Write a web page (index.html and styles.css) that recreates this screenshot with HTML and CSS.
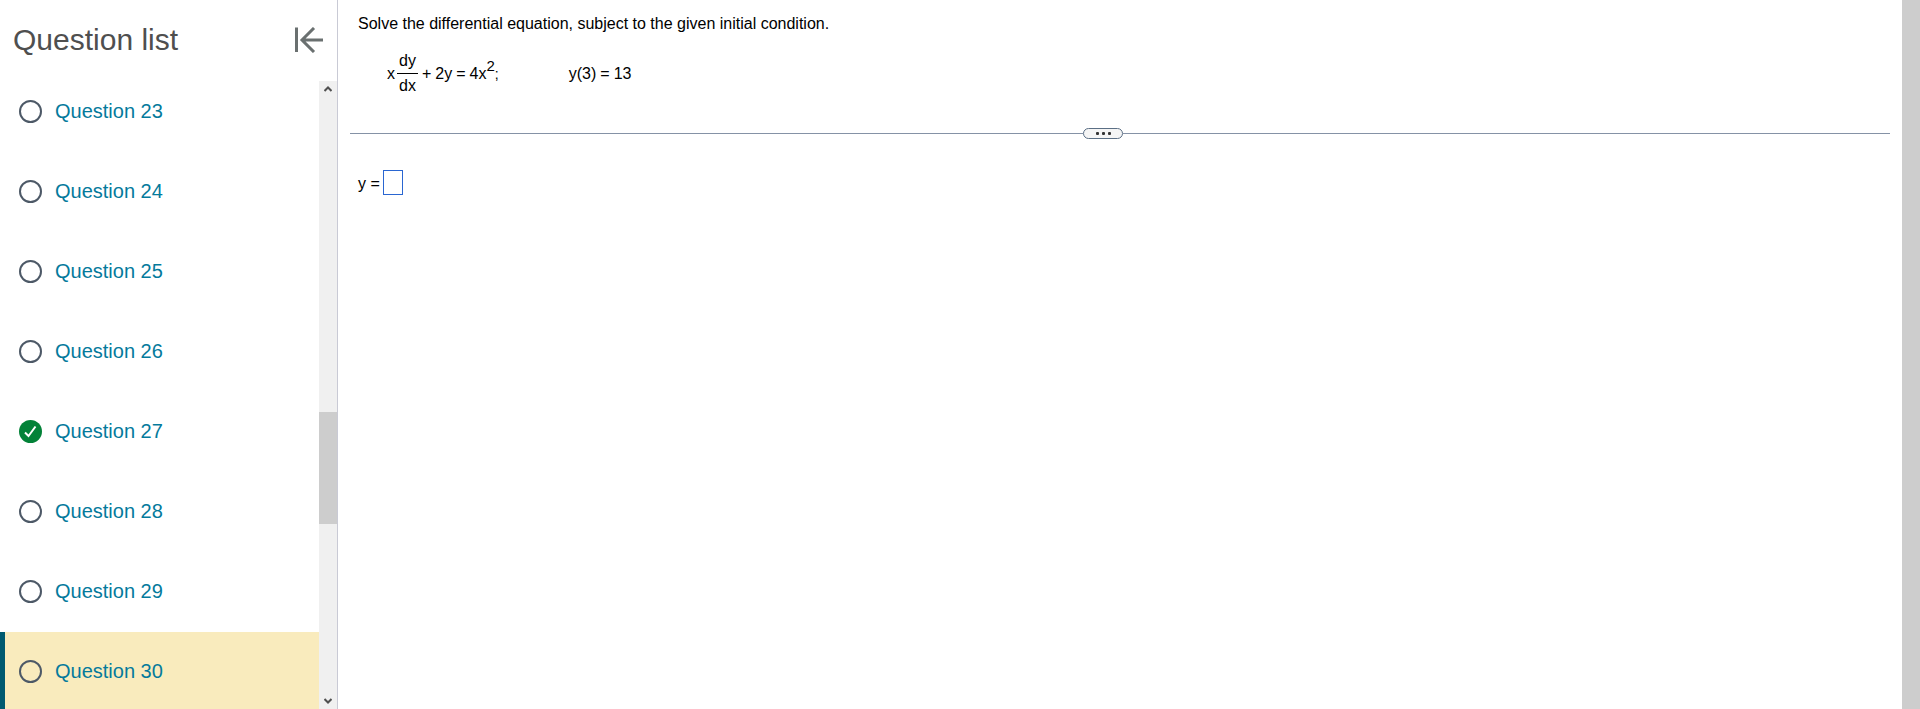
FILE: index.html
```html
<!DOCTYPE html>
<html lang="en">
<head>
	<meta charset="utf-8">
	<title>Question list</title>
	<link rel="stylesheet" href="styles.css">
</head>
<body>
	<aside class="sidebar">
		<div class="sidebar-header">
			<h1>Question list</h1>
			<button class="collapse" type="button" aria-label="Collapse question list">
				<svg width="28" height="26" viewBox="0 0 28 26">
					<path d="M1.5 0.5V25M28 13H7M19 1L7 13L19 25" />
				</svg>
			</button>
		</div>
		<div class="sidebar-body">
			<ul class="questions">
				<li><a href="#q23"><span class="circle"></span>Question 23</a></li>
				<li><a href="#q24"><span class="circle"></span>Question 24</a></li>
				<li><a href="#q25"><span class="circle"></span>Question 25</a></li>
				<li><a href="#q26"><span class="circle"></span>Question 26</a></li>
				<li><a href="#q27">
					<svg class="done" width="23" height="23" viewBox="0 0 23 23">
						<circle cx="11.5" cy="11.5" r="11.5" />
						<path d="M6 12.5L9.5 16L16.5 6.5" />
					</svg>Question 27</a></li>
				<li><a href="#q28"><span class="circle"></span>Question 28</a></li>
				<li><a href="#q29"><span class="circle"></span>Question 29</a></li>
				<li class="current"><a href="#q30"><span class="circle"></span>Question 30</a></li>
			</ul>
			<div class="scrollbar">
				<button class="scroll-button" type="button" aria-label="Scroll up">
					<svg width="8" height="6" viewBox="0 0 8 6"><path d="M0.5 5L4 1.5L7.5 5" /></svg>
				</button>
				<div class="track">
					<div class="thumb"></div>
				</div>
				<button class="scroll-button" type="button" aria-label="Scroll down">
					<svg width="8" height="6" viewBox="0 0 8 6"><path d="M0.5 1L4 4.5L7.5 1" /></svg>
				</button>
			</div>
		</div>
	</aside>
	<main class="content">
		<p class="prompt">Solve the differential equation, subject to the given initial condition.</p>
		<div class="equation">
			<span>x</span>
			<span class="fraction">
				<span class="top">dy</span>
				<span>dx</span>
			</span>
			<span class="terms"><span>+</span><span>2y</span><span>=</span><span>4x<sup>2</sup><small>;</small></span></span>
			<span class="terms condition"><span>y(3)</span><span>=</span><span>13</span></span>
		</div>
		<div class="divider">
			<button class="more" type="button" aria-label="Resize panels">
				<span></span><span></span><span></span>
			</button>
		</div>
		<div class="answer">
			<label for="answer">y =</label>
			<input type="text" id="answer">
		</div>
	</main>
	<div class="page-scroll"></div>
</body>
</html>
```
FILE: styles.css
```css
body {
	margin: 0;
	height: 100vh;
	display: flex;
	overflow: hidden;
	font-family: Arial, "Liberation Sans", sans-serif;
	font-size: 16px;
	color: #000;
	background-color: #fff;
}

button {
	padding: 0;
	border: none;
	background: none;
	cursor: pointer;
}

svg {
	display: block;
	fill: none;
}

/* left column */
.sidebar {
	width: 337px;
	flex-shrink: 0;
	display: flex;
	flex-direction: column;
	border-right: 1px solid #c9cad5;
}

.sidebar-header {
	height: 72px;
	flex-shrink: 0;
	display: flex;
	align-items: center;
	justify-content: space-between;
	padding: 8px 14px 0 13px;
	box-sizing: border-box;
}

h1 {
	margin: 0;
	font-size: 30px;
	font-weight: normal;
	line-height: 40px;
	color: #4f4f4f;
}

.collapse path {
	stroke: #6a7070;
	stroke-width: 3;
}

.sidebar-body {
	flex: 1;
	min-height: 0;
	display: flex;
}

.questions {
	flex: 1;
	margin: 0;
	padding: 0;
	list-style: none;
	overflow: hidden;
}

.questions a {
	height: 80px;
	display: flex;
	align-items: center;
	gap: 13px;
	padding: 0 19px 2px;
	box-sizing: border-box;
	font-size: 20px;
	line-height: 24px;
	color: #047a9c;
	text-decoration: none;
}

.questions .current a {
	border-left: 5px solid #005a70;
	padding-left: 14px;
	background-color: #f9ebbd;
}

.circle {
	width: 23px;
	height: 23px;
	box-sizing: border-box;
	border: 2px solid #4d5967;
	border-radius: 50%;
}

.done circle {
	fill: #038238;
}

.done path {
	stroke: #fff;
	stroke-width: 2;
}

.scrollbar {
	width: 18px;
	margin-top: 9px;
	display: flex;
	flex-direction: column;
	background-color: #f0f0f0;
}

.scroll-button {
	height: 16px;
	display: flex;
	align-items: center;
	justify-content: center;
}

.scroll-button path {
	stroke: #505050;
	stroke-width: 2;
}

.track {
	flex: 1;
	display: flex;
	flex-direction: column;
}

.track::before {
	content: "";
	flex: 315;
}

.track::after {
	content: "";
	flex: 169;
}

.thumb {
	flex: 112;
	background-color: #cdcdcd;
}

/* question panel */
.content {
	flex: 1;
	padding: 12px;
}

.prompt {
	margin: 0 8px;
	line-height: 24px;
}

.equation {
	display: flex;
	align-items: center;
	height: 52px;
	margin: 12px 0 0 37px;
	line-height: 24px;
}

.fraction {
	display: flex;
	flex-direction: column;
	align-items: center;
	width: 21px;
	margin: 0 4px 0 2px;
	padding-bottom: 2px;
}

.fraction .top {
	align-self: stretch;
	text-align: center;
	border-bottom: 1px solid #000;
}

.terms {
	display: flex;
	gap: 4px;
}

sup {
	font-size: 15px;
	line-height: 0;
	vertical-align: 8px;
}

small {
	font-size: 14px;
}

.condition {
	margin-left: 70px;
}

.divider {
	display: flex;
	align-items: center;
	margin-top: 28px;
}

.divider::before,
.divider::after {
	content: "";
	flex: 22;
	height: 1px;
	background-color: #8592a6;
}

.divider::after {
	flex: 23;
}

.more {
	width: 40px;
	height: 11px;
	display: flex;
	align-items: center;
	justify-content: center;
	gap: 3px;
	border: 1px solid #5b6f85;
	border-radius: 6px;
	background-color: #f5f5f5;
}

.more span {
	width: 3px;
	height: 3px;
	border-radius: 1px;
	background-color: #333;
}

.answer {
	display: flex;
	align-items: center;
	gap: 3px;
	margin: 31px 8px 0;
}

.answer label {
	padding-top: 2px;
}

.answer input {
	width: 20px;
	height: 25px;
	padding: 0;
	box-sizing: border-box;
	border: 1px solid #2a66d1;
	font: inherit;
}

/* outer scroll strip */
.page-scroll {
	width: 18px;
	background-color: #cdcdcd;
}
```
